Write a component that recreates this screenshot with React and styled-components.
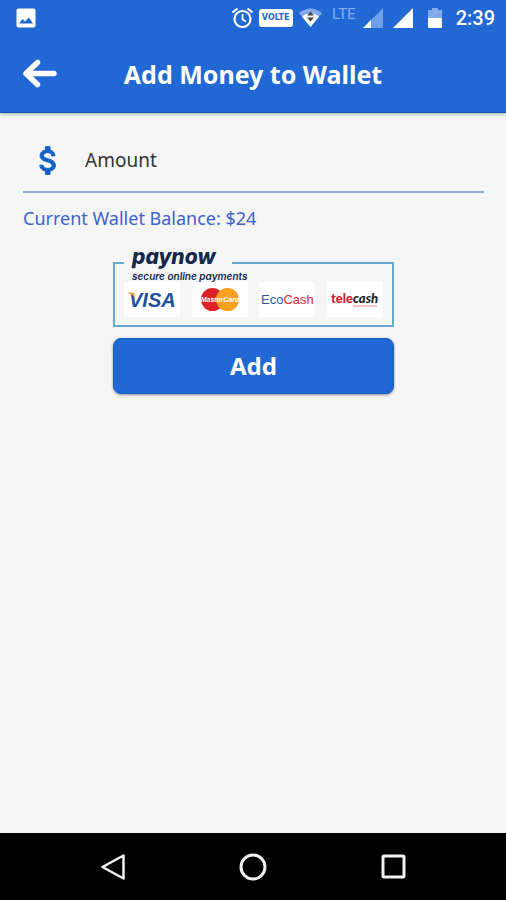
import styled, { createGlobalStyle } from "styled-components";

const GlobalStyle = createGlobalStyle`
  * {
    box-sizing: border-box;
  }

  body {
    margin: 0;
    background-color: #f6f6f6;
    font-family: "Noto Sans", "Open Sans", sans-serif;
  }
`;

const StyledScreen = styled.div`
  display: flex;
  flex-direction: column;
  min-height: 100vh;
`;

const StyledTopArea = styled.header`
  background-color: #2168d5;
  color: white;
  border-bottom: 1px solid #1557b8;
  box-shadow: 0 1px 4px rgba(0, 0, 0, 0.35);
`;

const StyledStatusBar = styled.div`
  display: flex;
  justify-content: space-between;
  align-items: center;
  height: 36px;
  padding: 0 11px 0 16px;
`;

const StyledStatusIcons = styled.div`
  display: flex;
  align-items: center;
  gap: 6px;
`;

const StyledVolteBadge = styled.span`
  width: 34px;
  border-radius: 3px;
  background-color: white;
  color: #2168d5;
  font: bold 8px/18px "DejaVu Sans", sans-serif;
  text-align: center;
`;

const StyledNetworkType = styled.span`
  width: 26px;
  padding-bottom: 8px;
  color: #82abec;
  font: 400 15px/16px Roboto, sans-serif;
  text-align: right;
`;

const StyledTime = styled.time`
  font: 500 20px/24px Roboto, sans-serif;
`;

const StyledAppBar = styled.div`
  display: grid;
  grid-template-columns: 1fr auto 1fr;
  align-items: center;
  height: 76px;
  padding: 0 20px;
`;

const StyledBackButton = styled.button`
  display: flex;
  justify-self: start;
  border: none;
  padding: 0;
  background: none;
  color: inherit;
`;

const StyledTitle = styled.h1`
  margin: 0;
  font-size: 25px;
  line-height: 32px;
`;

const StyledMain = styled.main`
  flex: 1;
  padding: 16px 22px 16px 23px;
`;

const StyledAmountRow = styled.label`
  display: flex;
  align-items: center;
  height: 64px;
  padding-left: 7px;
  border-bottom: 2px solid #8fa8e0;
  color: #1460cb;
`;

const StyledAmountInput = styled.input`
  flex: 1;
  min-width: 0;
  border: none;
  padding: 0 0 0 18px;
  outline: none;
  background: transparent;
  color: #333;
  font: 19px/28px "Noto Sans", sans-serif;

  &::placeholder {
    color: #333;
    opacity: 1;
  }
`;

const StyledBalance = styled.p`
  margin: 12px 0 13px;
  color: #3a62cf;
  font-size: 18px;
  line-height: 26px;
`;

const StyledCheckout = styled.section`
  padding: 0 90px;
`;

const StyledPaynow = styled.fieldset`
  display: block;
  min-width: 0;
  margin: 0 0 11px;
  border: 2px solid #66a9cc;
  padding: 0 9px 8px;
`;

const StyledPaynowLegend = styled.legend`
  width: 108px;
  padding: 0 0 0 8px;
  color: #14294d;
  font-family: Inter, sans-serif;
  font-style: italic;
  white-space: nowrap;
`;

const StyledPaynowName = styled.span`
  display: block;
  font-size: 21px;
  font-weight: 800;
  line-height: 26px;
`;

const StyledPaynowTagline = styled.span`
  display: block;
  font-size: 10px;
  font-weight: 600;
  line-height: 12px;
`;

const StyledCards = styled.div`
  display: flex;
  justify-content: space-between;
`;

const StyledCard = styled.svg`
  display: block;
  width: 56px;
  height: 35px;
  background-color: white;
`;

const StyledAddButton = styled.button`
  display: block;
  width: 100%;
  height: 56px;
  border: 1px solid #155bc4;
  border-radius: 8px;
  background-color: #2168d5;
  box-shadow: 0 1px 3px rgba(0, 0, 0, 0.4);
  color: white;
  font: bold 24px/32px "Noto Sans", sans-serif;
`;

const StyledNavBar = styled.nav`
  display: flex;
  align-items: center;
  height: 67px;
  padding: 0 43px;
  background-color: black;
`;

const StyledNavButton = styled.button`
  flex: 1;
  display: flex;
  justify-content: center;
  border: none;
  padding: 0;
  background: none;
  color: #f2f2f2;
`;

function StatusBar() {
  return (
    <StyledStatusBar>
      <svg width="20" height="20" viewBox="0 0 20 20">
        <rect x="0.5" y="0.5" width="19" height="19" rx="2" fill="white" />
        <path d="M3 15.500L6.500 11L9 13.500L13 9.500L17 15.500Z" fill="#2168d5" />
      </svg>
      <StyledStatusIcons>
        <svg width="22" height="22" viewBox="0 0 22 22" fill="none" stroke="white">
          <circle cx="11.500" cy="12" r="8" strokeWidth="2.200" />
          <path d="M11.500 7V12.500L15 14.500" strokeWidth="1.800" />
          <path d="M1.500 5.500L6.500 1.500M21.500 5.500L16.500 1.500" strokeWidth="2.200" />
        </svg>
        <StyledVolteBadge>VOLTE</StyledVolteBadge>
        <svg width="25" height="22" viewBox="0 0 25 22">
          <path d="M0 6Q11.500 -3 23 6L11.500 20Z" fill="#82abec" />
          <path d="M3 9.500Q11.500 3 20 9.500L11.500 20Z" fill="white" />
          <path d="M8 8.500L11.500 4.500L15 8.500ZM8 10.500H15L11.500 14.500Z" fill="#444" />
        </svg>
        <StyledNetworkType>LTE</StyledNetworkType>
        <svg width="24" height="22" viewBox="0 0 24 22">
          <path d="M1 21L21 1V21Z" fill="#6f9ee8" />
          <path d="M1 21L9 13V21Z" fill="white" />
        </svg>
        <svg width="22" height="22" viewBox="0 0 22 22">
          <path d="M1 21L21 1V21Z" fill="white" />
        </svg>
        <svg width="30" height="22" viewBox="0 0 30 22">
          <path d="M8 3H12V1H18V3H22V11H8Z" fill="#82abec" />
          <path d="M8 11H22V20Q22 21 21 21H9Q8 21 8 20Z" fill="white" />
        </svg>
        <StyledTime>2:39</StyledTime>
      </StyledStatusIcons>
    </StyledStatusBar>
  );
}

function DollarIcon() {
  return (
    <svg width="37" height="37" viewBox="0 0 24 24" fill="currentColor" stroke="currentColor" strokeWidth="0.6">
      <path d="M11.8 10.9c-2.27-.59-3-1.200-3-2.150 0-1.090 1.010-1.850 2.700-1.850 1.780 0 2.440.85 2.500 2.100h2.210c-.07-1.720-1.120-3.300-3.210-3.810V3h-3v2.160c-1.940.42-3.500 1.680-3.500 3.610 0 2.310 1.910 3.460 4.700 4.130 2.500.6 3 1.480 3 2.410 0 .69-.49 1.790-2.700 1.790-2.060 0-2.870-.92-2.980-2.100h-2.200c.12 2.190 1.760 3.420 3.680 3.830V21h3v-2.150c1.950-.37 3.500-1.500 3.500-3.550 0-2.840-2.430-3.810-4.700-4.400z" />
    </svg>
  );
}

function PaynowCards() {
  return (
    <StyledCards>
      <StyledCard viewBox="0 0 56 35" role="img" aria-label="Visa">
        <text
          x="5"
          y="25"
          fill="#1f4f9f"
          fontFamily="Liberation Sans"
          fontSize="20"
          fontStyle="italic"
          fontWeight="bold"
        >
          VISA
        </text>
        <path d="M4 10.500H8.500Q10.500 10.500 10.500 12.500L11.500 17Q9 12.500 4 11Z" fill="#f0a02c" />
      </StyledCard>
      <StyledCard viewBox="0 0 56 35" role="img" aria-label="MasterCard">
        <circle cx="20.500" cy="17.500" r="11.500" fill="#dc2227" />
        <circle cx="35.500" cy="17.500" r="11.500" fill="#f9a01f" />
        <text
          x="28"
          y="20"
          fill="white"
          fontFamily="Liberation Sans"
          fontSize="7"
          fontStyle="italic"
          fontWeight="bold"
          textAnchor="middle"
        >
          MasterCard
        </text>
      </StyledCard>
      <StyledCard viewBox="0 0 56 35" role="img" aria-label="EcoCash">
        <text x="2" y="22" fill="#2c56a8" fontFamily="Liberation Sans" fontSize="13">
          Eco<tspan fill="#df2a30">Cash</tspan>
        </text>
      </StyledCard>
      <StyledCard viewBox="0 0 56 35" role="img" aria-label="Telecash">
        <text x="4" y="21" fill="#d8202b" fontFamily="Lato" fontSize="13" fontWeight="900">
          tele
          <tspan fill="#222" fontStyle="italic">
            cash
          </tspan>
        </text>
        <path d="M26 24H50" stroke="#e58a8f" strokeWidth="1" />
      </StyledCard>
    </StyledCards>
  );
}

export default function App() {
  return (
    <>
      <GlobalStyle />
      <StyledScreen>
        <StyledTopArea>
          <StatusBar />
          <StyledAppBar>
            <StyledBackButton type="button" aria-label="Back">
              <svg
                width="40"
                height="32"
                viewBox="0 0 40 32"
                fill="none"
                stroke="white"
                strokeWidth="5.500"
                strokeLinejoin="round"
                strokeLinecap="round"
              >
                <path d="M6 15.500H34M17.500 4.500L6 15.500L17.500 26.500" />
              </svg>
            </StyledBackButton>
            <StyledTitle>Add Money to Wallet</StyledTitle>
          </StyledAppBar>
        </StyledTopArea>
        <StyledMain>
          <StyledAmountRow>
            <DollarIcon />
            <StyledAmountInput type="text" placeholder="Amount" aria-label="Amount" />
          </StyledAmountRow>
          <StyledBalance>Current Wallet Balance: $24</StyledBalance>
          <StyledCheckout>
            <StyledPaynow>
              <StyledPaynowLegend>
                <StyledPaynowName>paynow</StyledPaynowName>
                <StyledPaynowTagline>secure online payments</StyledPaynowTagline>
              </StyledPaynowLegend>
              <PaynowCards />
            </StyledPaynow>
            <StyledAddButton type="button">Add</StyledAddButton>
          </StyledCheckout>
        </StyledMain>
        <StyledNavBar>
          <StyledNavButton type="button" aria-label="Back">
            <svg width="28" height="28" viewBox="0 0 28 28" fill="none" stroke="currentColor" strokeWidth="2.500">
              <path d="M3.500 14L24.500 2.500V25.500Z" strokeLinejoin="round" />
            </svg>
          </StyledNavButton>
          <StyledNavButton type="button" aria-label="Home">
            <svg width="28" height="28" viewBox="0 0 28 28" fill="none" stroke="currentColor" strokeWidth="3">
              <circle cx="14" cy="14" r="12" />
            </svg>
          </StyledNavButton>
          <StyledNavButton type="button" aria-label="Recent apps">
            <svg width="28" height="28" viewBox="0 0 28 28" fill="none" stroke="currentColor" strokeWidth="3">
              <rect x="4" y="3" width="21" height="21" rx="1" />
            </svg>
          </StyledNavButton>
        </StyledNavBar>
      </StyledScreen>
    </>
  );
}
